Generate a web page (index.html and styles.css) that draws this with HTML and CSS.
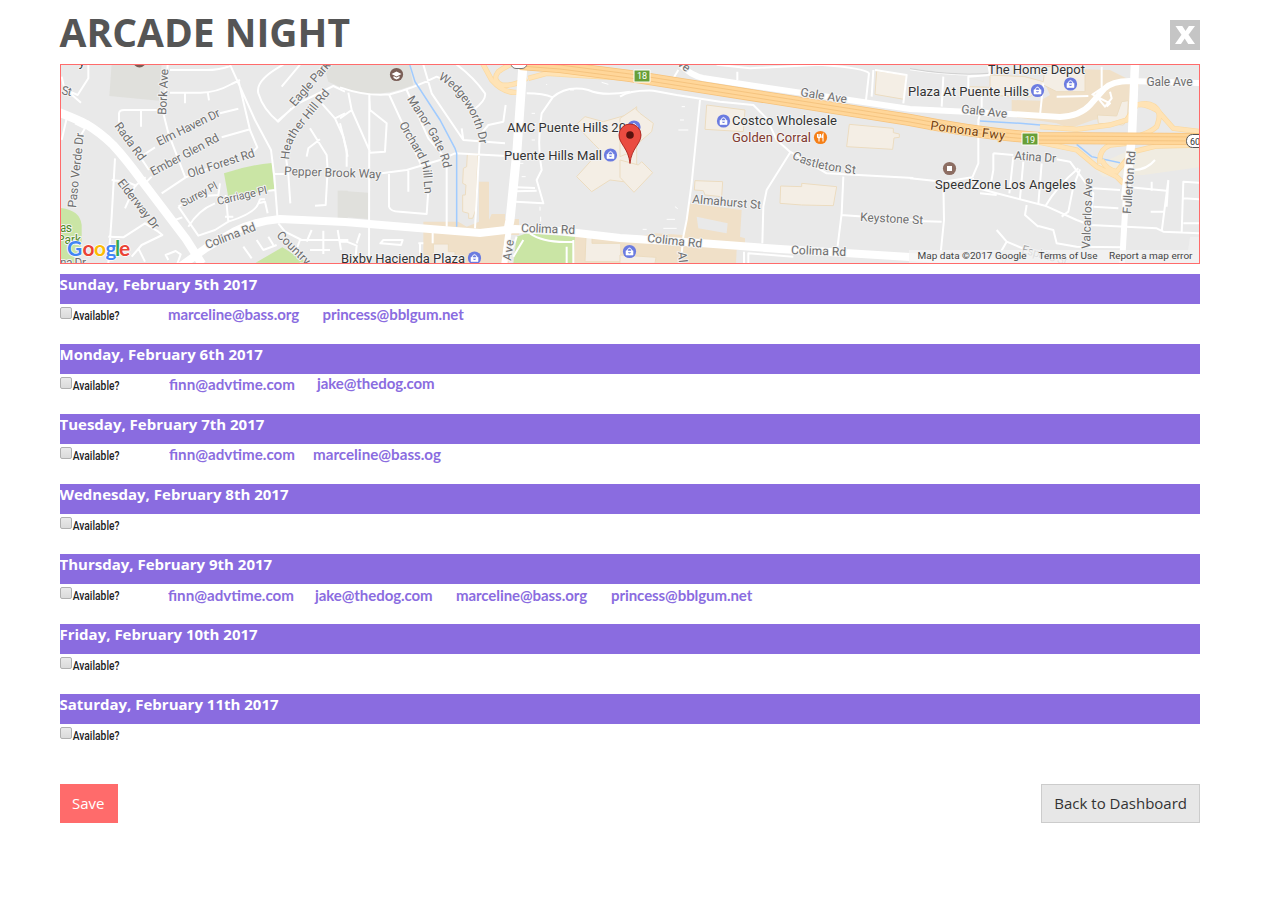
FILE: index.html
```html
<!DOCTYPE html>
<html lang="en">
<head>
<meta charset="utf-8">
<title>Arcade Night</title>
<link rel="stylesheet" href="styles.css">
</head>
<body>
<main class="page">
<header class="head">
  <h1 class="title">ARCADE NIGHT</h1>
  <button class="close" aria-label="Close"><svg width="30" height="30" viewBox="0 0 30 30"><path d="M5.500 6h6.800l3.200 5 3.400-5H25L18.500 14.700 25 24h-6.800l-3.500-5.500L11 24H5l6.500-9.200z" fill="#fff"/></svg></button>
</header>
<section class="map">
<svg width="1138" height="198" viewBox="61 65 1138 198">
  <defs>
    <g id="shop"><circle r="6.600" fill="#6b7be0"/><path d="M-3.500-.8h7V3.500h-7zM-2-.8V-2Q0-5.200 2-2v1.200" fill="#fff" stroke="#fff" stroke-width=".6"/><path d="M-1.500-.8V-1.800Q0-3.600 1.500-1.800v1zM-1.700.7Q0 3.200 1.700.7" fill="#6b7be0"/></g>
    <path id="heather" d="M289 160C290 148 291 143 300 130L331 92"/>
    <path id="wedge" d="M438 79C455 87 474 112 479 140L480 148"/>
    <path id="manor" d="M407 99C416 115 437 140 443 166L445 172"/>
    <path id="orchard" d="M399 124C407 142 418 152 423 170L425 196"/>
    <path id="castle" d="M792 158Q808 169 855 174L862 175"/>
  </defs>
  <rect x="60" y="64" width="1140" height="200" fill="#e9e9e9"/>

  <!-- West: blocks and local streets -->
  <g transform="translate(55 60) scale(.33333)">
    <path class="grey" d="M170 10H320L312 122 163 108zM805 10h70v80l-55-25z"/>
    <path class="park" d="M507 340Q580 315 650 309L658 388 560 407 520 412zM16 444Q75 450 80 495V550L60 610H16zM602 608L682 562 765 612z"/>
    <path class="grey" d="M848 392h30v82h-30z"/>
    <path class="street" d="M20 50L28 85 78 128M100 14V55L68 105 45 95M192 195V160Q193 150 208 150H310M258 152V200M338 14L335 60 325 160 340 220 390 350M345 98H430Q480 100 530 72L555 60M390 98V130M458 95l4 26M345 30H440Q490 32 525 18M525 14L600 180 648 270 658 350 668 480M550 60L585 210 607 262 585 285M265 285L300 262M495 160L550 146M265 375L290 350M500 232L585 208M272 352L240 378 210 445M320 400L392 352 500 310M245 275L282 330M685 14Q600 60 610 100 625 150 670 185L710 145M735 14L680 80M665 185L730 130 835 78 870 95M800 130L840 175 865 230 878 290M840 175L870 160M765 205L815 285 818 330 812 435 780 437M795 238L760 265 755 290M690 270L700 345 706 430M660 342H700M180 295L170 470 160 610M170 360L215 365 245 378M370 440Q420 405 490 405L495 370M370 440L430 527 480 510 520 485 512 405M400 500Q430 450 480 430M510 470h25M520 485Q600 460 610 430l20-5 8 35M610 430l5-12 15 0M640 392L662 390M160 530L205 532 270 490 310 515 322 525 260 555 230 590M250 565l20 40M340 600l-8-15 30-12 15 10-10 28M360 480l22-8M35 175L20 240M60 190L90 205 75 230M565 560l25 35M605 540l20 30 40-15M640 530l15 25M670 490L690 515 740 540H880M735 540L720 580M770 510L755 545M805 512v70M765 570h60M848 510l10 60"/>
  </g>
  <!-- Central west -->
  <g transform="translate(340 60) scale(.33333)">
    <path class="grey" d="M0 14H208L220 75Q130 110 60 100L0 82zM0 392L85 398V477L0 470z"/>
    <path class="shopblock" d="M417 365h30V480l8-18h40v15h42V525h-30V610H250V485H355L380 500 417 485zM702 525L880 535V612H695z"/>
    <path class="park" d="M520 610L530 530 560 520 705 530 700 610z"/>
    <path class="bldg" d="M382 282H414L407 450 398 475H386V460L368 455V405H376L378 375 368 370 370 325 380 320zM280 552H325V575H345V612H280zM738 530h18v20h90v55H735z"/>
    <path class="bldg" d="M707 195L735 170 790 185 860 165 890 140V370L810 360 755 395 710 350 755 300 780 270 760 250z"/>
    <path class="street" d="M0 82Q80 110 150 103 220 85 290 50L345 75M25 98L35 150 90 275 M35 150L0 175M0 190L20 270V320M88 110L90 150 140 190 135 275 90 278M88 100L87 610M148 105L215 250 245 320M200 90L265 235 320 300V500M250 14L275 100 370 240 495 250M345 10Q400 50 435 100 440 120 400 150M365 205L370 240M497 135L490 185 445 195 420 225 405 505M125 340L200 330 300 300 345 280 500 288M147 342V440Q150 455 180 455L260 462 265 390M205 332V395M560 100Q610 100 638 112L605 160Q590 250 605 330L590 360 610 430 528 425M530 382L585 384M528 394L590 392M638 112Q680 75 745 90 790 110 870 95M530 530L525 545 500 600M570 520Q610 550 700 545M550 540l-30 50M700 540V610M680 560v50M130 540h58l-5 15-62-5zM0 545h20l30 12-5 50M50 550l10-30M240 550v50M278 500V550M235 550h15"/>
    <path class="water" d="M208 10L225 65 300 180 345 265 350 280V500"/>
    <path d="M620 75v-3M690 90h12M785 67l20 6M575 160h10M575 195l14-5M575 240h10M545 350h12M540 310h10M600 440v12M602 470v15" stroke="#fff" stroke-width="3"/>
    <path class="rampEdge" d="M425 5L455 60Q490 100 530 97M560 55Q520 80 485 75 455 60 475 35 495 20 520 10M565 55L620 40 700 45 870 55"/>
    <path class="ramp" d="M425 5L455 60Q490 100 530 97M560 55Q520 80 485 75 455 60 475 35 495 20 520 10M565 55L620 40 700 45 870 55"/>
  </g>
  <!-- Central east -->
  <g transform="translate(620 60) scale(.33333)">
    <path class="shopblock" d="M208 430L365 450 360 530 375 535V570H350L348 610H0V540L105 520 190 525zM230 470L235 505 320 520 323 490z" fill-rule="evenodd"/>
    <path class="bldg" d="M0 175L45 145 60 160 100 190 95 215 60 245 35 275 0 290zM0 300L55 315 65 305 98 338 42 397 0 352zM260 135L375 150 370 215 255 208zM225 362L308 365 305 410 255 405 250 392 223 390zM482 378L545 380V370L650 380 645 408 640 437 545 435 480 430zM688 193L820 205V218L838 222V232L822 234 818 268 680 260zM770 33L860 45 852 118 765 103zM0 585L108 592 105 610H0z"/>
    <path class="street" d="M0 110Q30 90 100 92L170 105 300 125 400 135 440 175 470 240 510 275 620 340 880 354M240 120L215 370 200 480 190 530 182 610M510 278L440 390 430 440 427 550M670 350L665 460 652 565M662 465L880 480M145 55L160 55 175 30M352 35V60M290 14L390 25 600 14Q740 25 747 40L738 120M765 30L860 45 850 130M755 110l5-80M372 575V610M385 610V580L520 590"/>
    <path d="M185 140h10M180 180h12M175 210h30M140 478h25M165 440l8 6M130 505h40M68 508h12" stroke="#fff" stroke-width="3"/>
  </g>
  <!-- East -->
  <g transform="translate(910 60) scale(.33333)">
    <path class="shopblock" d="M410 25L600 30 660 60 690 55 670 160 550 180 480 205 440 190 305 170V120L390 122 420 105 400 60z"/>
    <path d="M550 320L660 270 880 260V320L700 345 580 350z" fill="#f0ece1"/>
    <path d="M840 530h40v70h-50z" fill="#efefef"/>
    <path class="bldg" d="M240 45L345 50 400 65 405 18 525 30V95H440L400 75 360 110 180 105 178 80 240 82zM562 165L620 168 635 125 655 122 652 180 640 195 565 190z"/>
    <path class="street" d="M0 28Q150 50 240 42L235 14M100 50L95 140M240 45L175 50V105M400 70L390 165M215 110V150L205 180V310L187 352M187 352L100 365 0 355M100 365L102 480 92 580M20 483L95 485M188 355L205 385 260 400 405 437 500 480 540 495 740 505 760 515 868 520M250 280V330L240 385M250 280L310 285M310 290L298 400M340 305L330 415M395 310L385 432M440 298L480 305 550 400 540 500M505 325Q440 380 405 440M510 328L490 380 475 455 455 470M210 400L260 405M350 435L345 465 385 500M385 498L430 510 440 550 500 560 640 562M548 385L630 390M550 440L625 445M645 380L770 392M725 365V392M775 360L755 515M760 455H722M775 362L770 440M868 368L820 365 815 520M820 415L868 418M820 490H868M260 510L290 545 350 570 480 590M290 545L270 580M120 600l10 10M550 105L600 130 590 140M600 95L605 115 585 140 560 110M545 105L575 85V20M440 110L535 108M670 330Q710 330 735 300"/>
    <path class="water" d="M210 183L330 190 470 202M500 253L545 290 630 308"/>
    <path class="rampEdge" d="M390 200L500 208 600 195 650 180 680 135Q730 120 750 160L790 205 870 215M650 240Q720 220 740 200 755 160 740 150 700 130 685 135M380 245L500 270 560 320 620 350 640 370M570 310Q565 270 600 255L650 250M575 300Q590 330 620 335L670 275 740 258 870 255"/>
    <path class="ramp" d="M390 200L500 208 600 195 650 180 680 135Q730 120 750 160L790 205 870 215M650 240Q720 220 740 200 755 160 740 150 700 130 685 135M380 245L500 270 560 320 620 350 640 370M570 310Q565 270 600 255L650 250M575 300Q590 330 620 335L670 275 740 258 870 255"/>
    <path d="M0 26Q130 48 235 40" fill="none" stroke="#d2d2d2" stroke-width="4"/>
  </g>

  <!-- Main roads -->
  <g fill="none" stroke="#fff">
    <path d="M58 112Q76 119 86 124 101 133 113 145 126 159 142 181L186 239 202 264" stroke-width="8.500"/>
    <path d="M181 266L206 248 235 231Q256 221 280 219L345 222 430 229 480 233 515 229 560 231 620 238 700 243 780 249 910 257 1000 263" stroke-width="8"/>
    <path d="M523 64L517 150 510 220 508 230" stroke-width="9"/><path d="M509 228L504 266" stroke-width="6"/>
    <path d="M680 64Q690 75 703 78L755 86 910 109 1010 114 1060 117Q1080 116 1090 105L1104 89Q1112 81 1130 81L1200 83" stroke-width="6"/>
    <path d="M1135 64L1132 135 1125 200" stroke-width="8.500"/><path d="M1126 195L1122 264" stroke-width="6"/>
  </g>
  <path d="M520 64L560 67 630 76 700 87 910 120Q980 134 1040 138L1200 139" fill="none" stroke="#f6c27b" stroke-width="12"/>
  <path d="M520 64L560 67 630 76 700 87 910 120Q980 134 1040 138L1200 139" fill="none" stroke="#ffd699" stroke-width="10.500"/>
  <path d="M520 62L560 65 630 74 700 85 910 118Q980 132 1040 136L1200 137M520 66L560 69 630 78 700 89 910 122Q980 136 1040 140L1200 141" fill="none" stroke="#f3bf78" stroke-width=".8"/>

  <!-- Street names -->
  <g class="road">
    <text transform="translate(61 94) rotate(12)" textLength="10">St</text>
    <text transform="translate(166 115) rotate(-87)" textLength="46">Bork Ave</text>
    <text transform="translate(114 126) rotate(54)" textLength="44">Rada Rd</text>
    <text transform="translate(159 146) rotate(-26)" textLength="69">Elm Haven Dr</text>
    <text transform="translate(153 176) rotate(-28)" textLength="76">Ember Glen Rd</text>
    <text transform="translate(189 178) rotate(-18)" textLength="70">Old Forest Rd</text>
    <text transform="translate(76 208) rotate(-84)" textLength="75">Paso Verde Dr</text>
    <text transform="translate(117 183) rotate(52)" textLength="60">Elderway Dr</text>
    <text class="small" transform="translate(183 207) rotate(-28)" textLength="40">Surrey Pl</text>
    <text class="small" transform="translate(218 205) rotate(-13)" textLength="51">Carriage Pl</text>
    <text transform="translate(207 249) rotate(-21)" textLength="53">Colima Rd</text>
    <text transform="translate(295 107) rotate(-49)" textLength="55">Eagle Park</text>
    <text><textPath href="#heather" textLength="80">Heather Hill Rd</textPath></text>
    <text transform="translate(284 175) rotate(2)" textLength="97">Pepper Brook Way</text>
    <text transform="translate(276 236) rotate(45)" textLength="42">Country</text>
    <text><textPath href="#wedge" textLength="80">Wedgeworth Dr</textPath></text>
    <text><textPath href="#manor" textLength="79">Manor Gate Rd</textPath></text>
    <text><textPath href="#orchard" textLength="76">Orchard Hill Ln</textPath></text>
    <text transform="translate(521 232) rotate(2)" textLength="54">Colima Rd</text>
    <text transform="translate(511 261) rotate(-82)" textLength="21">Ave</text>
    <text transform="translate(647 242) rotate(6)" textLength="55">Colima Rd</text>
    <text transform="translate(791 254) rotate(2)" textLength="55">Colima Rd</text>
    <text transform="translate(678 252) rotate(85)" textLength="11">Al</text>
    <text transform="translate(677 65) rotate(38)" textLength="12">ve</text>
    <text transform="translate(800 96) rotate(9)" textLength="47">Gale Ave</text>
    <text transform="translate(692 203) rotate(5)" textLength="69">Almahurst St</text>
    <text><textPath href="#castle" textLength="66">Castleton St</textPath></text>
    <text transform="translate(860 221) rotate(3)" textLength="63">Keystone St</text>
    <text transform="translate(961 113) rotate(6)" textLength="46">Gale Ave</text>
    <text x="1146.500" y="85.500" textLength="46">Gale Ave</text>
    <text transform="translate(1014 159.500) rotate(4)" textLength="42">Atina Dr</text>
    <text transform="translate(1090 249) rotate(-88)" textLength="71">Valcarlos Ave</text>
    <text transform="translate(1131 214) rotate(-86)" textLength="63">Fullerton Rd</text>
    <text class="faint" transform="translate(1021 253) rotate(15)" textLength="47">Espirito St</text>
    <text class="fwy" transform="translate(930 129.500) rotate(8)" textLength="75">Pomona Fwy</text>
  </g>
  <g fill="#4f8a22" class="parkname"><text x="60" y="232" textLength="12">as</text><text x="57" y="244" textLength="24">Park</text></g>
  <g class="road"><text x="60" y="267" textLength="26">na Dr</text></g>
  <g class="place"><text x="85" y="66" text-anchor="end">y</text></g>

  <!-- Places -->
  <g class="place">
    <text x="341" y="262.500" textLength="124">Bixby Hacienda Plaza</text>
    <text x="507" y="131.500" textLength="119">AMC Puente Hills 20</text>
    <text x="504" y="159.500" textLength="98">Puente Hills Mall</text>
    <text x="732" y="124.500" textLength="105">Costco Wholesale</text>
    <text x="732" y="141.500" textLength="79" class="food">Golden Corral</text>
    <text x="908" y="95.500" textLength="121">Plaza At Puente Hills</text>
    <text x="988" y="73.500" textLength="97">The Home Depot</text>
    <text x="935" y="188.500" textLength="141">SpeedZone Los Angeles</text>
  </g>
  <use href="#shop" x="474.500" y="258"/><use href="#shop" x="634" y="127"/><use href="#shop" x="610.500" y="155"/><use href="#shop" x="629.500" y="251.500"/><use href="#shop" x="723.500" y="121"/><use href="#shop" x="1037.500" y="90.500"/><use href="#shop" x="1070.500" y="84"/>
  <circle cx="820.500" cy="137.500" r="6.600" fill="#f57f17"/><path d="M817.500 134v3q1.500 1.500 3 0v-3M819 134v7.500M823 141.500v-7.500q-1.500 2-1 4" fill="none" stroke="#fff" stroke-width="1.100"/>
  <circle cx="949.500" cy="168.500" r="6.600" fill="#8d6e63"/><rect x="947" y="166" width="5" height="5" fill="#fff"/>
  <circle cx="396.500" cy="74.500" r="6.600" fill="#795d55"/><path d="M391.500 74l5-2.500 5 2.500-5 2.500zM393.500 76l3 1.500 3-1.500v2l-3 1.500-3-1.500z" fill="#fff"/>
  <circle cx="139.500" cy="61" r="6.500" fill="#795d55"/>
  <g class="exit"><path d="M634 70h16v12h-16zM1022 133h16v12h-16z" fill="#689f38" stroke="#fff"/><text x="642" y="79.300">18</text><text x="1030" y="142.500">19</text></g>
  <rect x="1186.500" y="134.500" width="22" height="13" rx="6" fill="#fff" stroke="#555"/><text x="1190" y="144.500" font-size="9" fill="#333">60</text>
  <rect x="511" y="58" width="16" height="10.500" rx="5" fill="#fff" stroke="#777"/>
  <!-- Selected location pin -->
  <path d="M630 163.500C628.500 148 619 144 619 135A11 11 0 0 1 641 135C641 144 631.500 148 630 163.500z" fill="#ea4b40" stroke="#a8231c" stroke-width=".9"/><circle cx="630" cy="135" r="3.800" fill="#59120e"/>

  <!-- Attribution -->
  <rect x="909" y="250" width="291" height="14" fill="#f3f3f3" opacity=".7"/>
  <g class="legal"><text x="917.500" y="259" textLength="109" lengthAdjust="spacingAndGlyphs">Map data ©2017 Google</text><text x="1038.500" y="259" textLength="59" lengthAdjust="spacingAndGlyphs">Terms of Use</text><text x="1109" y="259" textLength="83.500" lengthAdjust="spacingAndGlyphs">Report a map error</text></g>
  <text class="logo" y="255.500"><tspan x="67" fill="#4285f4">G</tspan><tspan x="82.500" fill="#ea4335">o</tspan><tspan x="94" fill="#fbbc05">o</tspan><tspan x="105.500" fill="#4285f4">g</tspan><tspan x="115" fill="#34a853">l</tspan><tspan x="119" fill="#ea4335">e</tspan></text>
</svg>
</section>
<section class="days">
  <div class="day"><h2>Sunday, February 5th 2017</h2><div class="row sun"><label><i class="box"></i><span>Available?</span></label><b>marceline@bass.org</b><b>princess@bblgum.net</b></div></div>
  <div class="day"><h2>Monday, February 6th 2017</h2><div class="row mon"><label><i class="box"></i><span>Available?</span></label><b class="wide">finn@advtime.com</b><b class="raised">jake@thedog.com</b></div></div>
  <div class="day"><h2>Tuesday, February 7th 2017</h2><div class="row tue"><label><i class="box"></i><span>Available?</span></label><b class="wide">finn@advtime.com</b><b class="wide">marceline@bass.og</b></div></div>
  <div class="day"><h2>Wednesday, February 8th 2017</h2><div class="row"><label><i class="box"></i><span>Available?</span></label></div></div>
  <div class="day"><h2>Thursday, February 9th 2017</h2><div class="row thu"><label><i class="box"></i><span>Available?</span></label><b class="wide">finn@advtime.com</b><b>jake@thedog.com</b><b>marceline@bass.org</b><b>princess@bblgum.net</b></div></div>
  <div class="day"><h2>Friday, February 10th 2017</h2><div class="row"><label><i class="box"></i><span>Available?</span></label></div></div>
  <div class="day"><h2>Saturday, February 11th 2017</h2><div class="row"><label><i class="box"></i><span>Available?</span></label></div></div>
</section>
<footer class="actions"><button class="btn save">Save</button><button class="btn back">Back to Dashboard</button></footer>
</main>
</body>
</html>
```
FILE: styles.css
```css
* { box-sizing: border-box; }
body { margin: 0; background: #fff; font-family: "Open Sans", sans-serif; overflow: hidden; }
.page { width: 1140px; margin-left: 60px; }
.head { height: 64px; display: flex; justify-content: space-between; align-items: flex-start; }
.title { margin: 4px 0 0; font-size: 39px; line-height: 56px; font-weight: 700; color: #555; white-space: nowrap; text-indent: -0.5px; }
.close { width: 30px; height: 30px; margin-top: 20px; padding: 0; border: 0; background: #c5c5c5; }
.close svg, .map svg { display: block; }
.map { height: 200px; border: 1px solid #ff6b6b; overflow: hidden; }
.map text { font-family: Roboto, sans-serif; }
.grey { fill: #e0e0dc; }
.park { fill: #cae5a5; }
.shopblock { fill: #f0e0c8; }
.bldg { fill: #f4eee5; stroke: #ecdcc0; stroke-width: 3; }
.street { fill: none; stroke: #fff; stroke-width: 6; stroke-linejoin: round; }
.water { fill: none; stroke: #a0cbff; stroke-width: 4.5; }
.rampEdge { fill: none; stroke: #fbd9a0; stroke-width: 16; }
.ramp { fill: none; stroke: #ffe3b5; stroke-width: 12; }
.road text, .place text, .parkname text { stroke: #f3f3f3; stroke-width: 2px; paint-order: stroke; stroke-linejoin: round; }
.road text { font-size: 12px; fill: #6e6e6e; }
.road .small { font-size: 11px; }
.road .faint { fill: #aaa; }
.road .fwy { font-size: 12.5px; fill: #75400f; stroke: #ffe0ae; }
.parkname text { font-size: 12px; }
.place text { font-size: 13px; fill: #333; }
.place .food { fill: #80382f; }
.exit text { font-size: 9px; text-anchor: middle; fill: #fff; }
.legal text { font-size: 9.5px; fill: #444; }
.map .logo { font-family: Lato, sans-serif; font-size: 21px; font-weight: 700; stroke: #fff; stroke-width: 1.5px; paint-order: stroke; }
.days { margin-top: 10px; }
.day { height: 70px; }
.day h2 { margin: 0; height: 30px; background: #8a6ce0; color: #fff; font-size: 15px; line-height: 21px; font-weight: 700; text-indent: -0.5px; }
.row { display: grid; height: 40px; align-items: start; grid-template-columns: 108px; }
.sun { grid-template-columns: 108px 154.5px auto; }
.mon { grid-template-columns: 109px 148px auto; }
.tue { grid-template-columns: 109px 144px auto; }
.thu { grid-template-columns: 108px 147px 141px 155px auto; }
.row label { display: flex; align-items: flex-start; }
.box { width: 12px; height: 12px; margin-top: 3px; border: 1px solid #b0b0b0; border-radius: 2px; background: linear-gradient(#e9e9e9, #dadada); }
.row span { font: 500 13.5px/23px Roboto, sans-serif; color: #222; width: 65px; transform: scaleX(.76); transform-origin: 0 0; padding-left: 1px; }
.row b { margin-top: -1px; font: 700 15px/22px Lato, sans-serif; letter-spacing: -0.07px; color: #8a6ce0; white-space: nowrap; font-variant-ligatures: common-ligatures; }
.row .wide { letter-spacing: 0; word-spacing: 0; transform: scaleX(1.01); transform-origin: 0 0; justify-self: start; }
.row .raised { margin-top: -2px; }
.thu b { padding-top: 1px; }
.actions { display: flex; justify-content: space-between; margin-top: 20px; }
.btn { height: 39px; padding: 0 12px; font: 15px/37px "Open Sans", sans-serif; border: 1px solid #ccc; background: #e7e7e7; color: #333; }
.save { width: 58px; padding: 0 13px 0 11px; background: #ff6b6b; border-color: #ff6b6b; color: #fff; }
```
